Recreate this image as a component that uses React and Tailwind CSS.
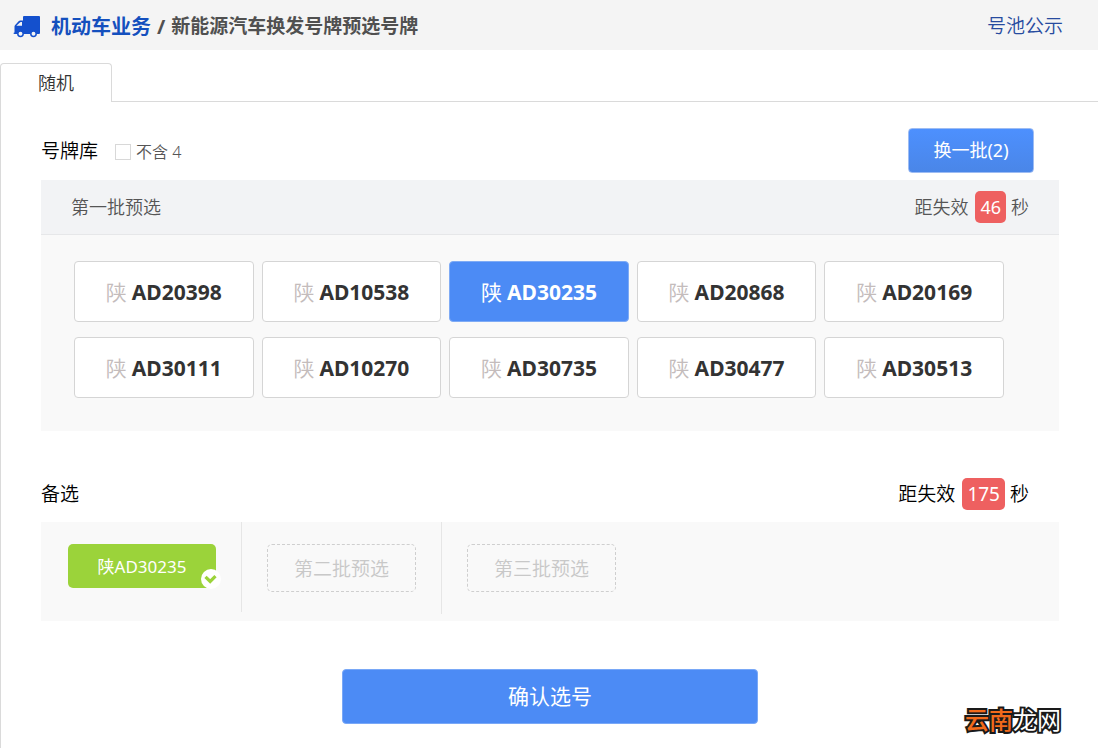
import { useState } from "react";

const plates = [
  "AD20398", "AD10538", "AD30235", "AD20868", "AD20169",
  "AD30111", "AD10270", "AD30735", "AD30477", "AD30513",
];

function TruckIcon() {
  return (
    <svg viewBox="0 0 27 22" className="h-[22px] w-[27px] shrink-0" aria-hidden="true">
      <path
        fill="#1450cd"
        fillRule="evenodd"
        d="M10 1Q10 0 11 0H26Q27 0 27 1V17Q27 18 26 18H1.5Q.5 18 .5 17.2Q.5 16.6 1.5 16.4V10.6Q1.5 9.6 2.2 8.9L5.6 5.2Q6.3 4.4 7.3 4.4H10ZM3.6 9.8H9V6H7.7Q7.3 6 6.9 6.4L3.6 9.6Z"
      />
      <g fill="#f4f4f4" stroke="#1450cd" strokeWidth="1.5">
        <circle cx="7.5" cy="17.8" r="2.7" />
        <circle cx="20.5" cy="17.8" r="2.7" />
      </g>
    </svg>
  );
}

function CheckBadge() {
  return (
    <span className="absolute -right-[5px] -bottom-[1px] flex size-5 items-center justify-center rounded-full bg-white">
      <svg viewBox="0 0 14 12" className="h-3 w-3.5" aria-hidden="true">
        <path d="M1.5 3.8L6.2 8.5L11.5 3.2" fill="none" stroke="#9bd33a" strokeWidth="3.2" />
      </svg>
    </span>
  );
}

function Countdown({ seconds, className }) {
  return (
    <p className={"flex items-center " + className}>
      距失效
      <span className="mr-[5px] ml-[7px] flex h-8 items-center rounded-[5px] bg-[#ee6060] px-[5px] font-normal text-white">
        {seconds}
      </span>
      秒
    </p>
  );
}

function EmptySlot({ children }) {
  return (
    <div className="flex h-12 w-[149px] items-center justify-center rounded-[5px] border border-dashed border-[#cfcfcf] pt-[2px] text-[19px] text-[#c8c8c8]">
      {children}
    </div>
  );
}

export default function App() {
  const [selected, setSelected] = useState("AD30235");

  return (
    <div className="relative flex min-h-screen flex-col bg-white font-['Noto_Sans','Noto_Sans_CJK_SC',sans-serif] font-[350] text-[#333]">
      <header className="flex h-[50px] items-center justify-between bg-[#f4f4f4] pt-[3px] pr-[35px] pl-[13px]">
        <h1 className="flex items-center font-bold text-[#505050]">
          <TruckIcon />
          <a href="#business" className="ml-[11px] text-[20px] text-[#1450be]">机动车业务</a>
          <span className="mx-[6px] text-[20px]">/</span>
          <span className="text-[19px]">新能源汽车换发号牌预选号牌</span>
        </h1>
        <a href="#pool" className="text-[19px] text-[#274b9f]">号池公示</a>
      </header>

      <nav className="mt-[13px] flex" role="tablist">
        <button
          role="tab"
          aria-selected="true"
          className="h-[39px] w-28 rounded-t-[4px] border border-b-0 border-[#dadada] text-[18px] font-[350]"
        >
          随机
        </button>
        <div className="flex-1 border-b border-[#dadada]" />
      </nav>

      <main className="flex-1 border-l border-[#dadada] pt-[26px] pr-[39px] pb-6 pl-10">
        <section>
          <div className="flex items-center pr-[25px]">
            <h2 className="pt-[2px] text-[19px] text-black">号牌库</h2>
            <label className="ml-[17px] flex items-center gap-[5px] pt-[2px] text-[16px] text-[#555]">
              <input type="checkbox" className="size-4 appearance-none border border-[#d8d8d8] bg-white checked:bg-[#4c8bf5]" />
              不含 4
            </label>
            <button className="ml-auto h-[45px] w-[126px] rounded-[4px] border border-[#9dbcf3] bg-linear-to-b from-[#4d90fe] to-[#4a86e8] text-[18px] font-normal text-white">
              换一批(2)
            </button>
          </div>

          <div className="mt-[7px] bg-[#f9f9f9]">
            <div className="flex h-[55px] items-center justify-between border-b border-[#e6e7e9] bg-[#f2f3f5] px-[30px] text-[18px] text-[#555]">
              <h3>第一批预选</h3>
              <Countdown seconds={46} className="text-[18px] text-[#555]" />
            </div>
            <div className="grid grid-cols-5 gap-x-2 gap-y-[15px] pt-[26px] pr-[55px] pb-[33px] pl-[33px]">
              {plates.map((plate) => {
                const active = plate === selected;
                return (
                  <button
                    key={plate}
                    aria-pressed={active}
                    onClick={() => setSelected(plate)}
                    className={
                      "flex h-[61px] items-center justify-center gap-[5px] rounded-[4px] border pt-[2px] " +
                      (active
                        ? "border-[#7fabf5] bg-[#4c8bf5] text-white"
                        : "border-[#d5d5d5] bg-white text-[#333]")
                    }
                  >
                    <span className={"text-[21px] " + (active ? "font-normal" : "font-[350] text-[#c4bcbc]")}>陕</span>
                    <span className="text-[21px] font-bold">{plate}</span>
                  </button>
                );
              })}
            </div>
          </div>
        </section>

        <section className="mt-[47px]">
          <div className="flex items-center justify-between pr-[30px] text-black">
            <h2 className="text-[19px]">备选</h2>
            <Countdown seconds={175} className="text-[19px]" />
          </div>
          <div className="mt-3 flex h-[99px] bg-[#f9f9f9]">
            <div className="h-[90px] w-[201px] border-r border-[#e6e6e6] pt-[22px] pl-[27px]">
              <div className="relative flex h-11 w-[148px] items-center justify-center rounded-[5px] bg-[#9bd33a] pt-[2px] text-[17px] font-normal text-white">
                陕{selected}
                <CheckBadge />
              </div>
            </div>
            <div className="h-[92px] w-[200px] border-r border-[#e6e6e6] pt-[22px] pl-[25px]">
              <EmptySlot>第二批预选</EmptySlot>
            </div>
            <div className="pt-[22px] pl-[25px]">
              <EmptySlot>第三批预选</EmptySlot>
            </div>
          </div>
        </section>

        <div className="mt-12 flex justify-center">
          <button className="h-[55px] w-[416px] rounded-[4px] border border-[#79a8f7] bg-[#4c8bf5] text-[21px] font-normal text-white">
            确认选号
          </button>
        </div>
      </main>

      <p className="absolute right-[37px] bottom-[10px] text-[24px] leading-9 font-normal [paint-order:stroke_fill] [-webkit-text-stroke:4px_#1a1a1a]">
        <span className="font-medium text-[#f26a1b]">云南</span>
        <span className="text-white">龙网</span>
      </p>
    </div>
  );
}
